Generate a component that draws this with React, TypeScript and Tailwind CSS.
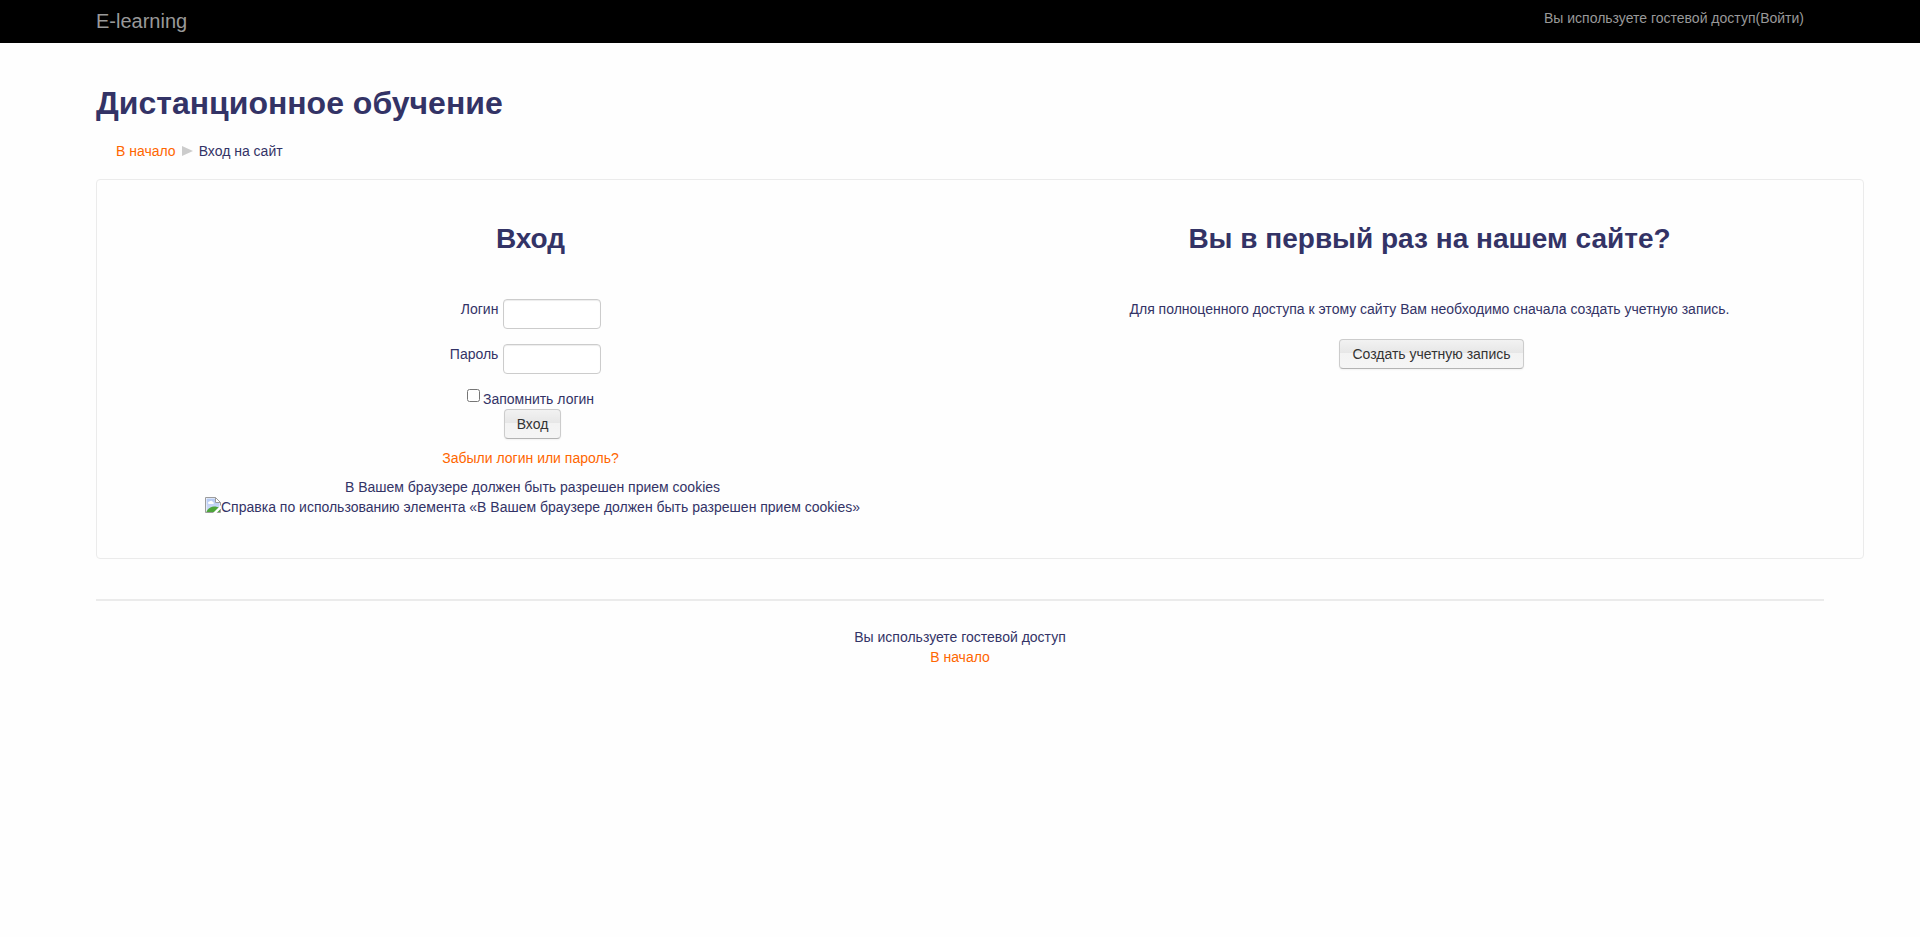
import React from "react";

function BrokenImageIcon() {
  return (
    <svg width="16" height="16" viewBox="0 0 16 16" className="shrink-0" aria-hidden="true">
      <defs>
        <clipPath id="page-body">
          <path d="M1 1H10.5L15 5.5V15H1Z" />
        </clipPath>
        <linearGradient id="sky" x1="0" y1="0" x2="0" y2="1">
          <stop offset="0" stopColor="#b4c9f3" />
          <stop offset="1" stopColor="#d3dff8" />
        </linearGradient>
      </defs>
      <path d="M0.5 0.5H10.5L15.5 5.5V15.5H0.5Z" fill="#fff" stroke="#9c9c9c" />
      <g clipPath="url(#page-body)">
        <rect x="1.5" y="1.5" width="13" height="13" fill="url(#sky)" />
        <path d="M3 6.2a1.4 1.4 0 0 1 1.5-1.6 1.8 1.8 0 0 1 3.3 0.3 1.2 1.2 0 0 1 0.6 2.1H3.8Z" fill="#fff" />
        <path d="M1.5 14.5C3 11.5 6 9.5 9 9.5c2.5 0 4 0.5 6 1.5v4H1.5Z" fill="#4da53a" />
      </g>
      <path d="M16 8L8 16H11.5L16 11.5Z" fill="#fff" />
      <path d="M10.5 0.5V5.5H15.5Z" fill="#fff" stroke="#9c9c9c" />
    </svg>
  );
}

const linkClass = "text-[#ff6600] hover:underline";
const inputClass =
  "h-[30px] w-[98px] rounded border border-[#cccccc] bg-white px-1.5 text-sm text-[#555555] shadow-[inset_0_1px_1px_rgba(0,0,0,0.075)]";
const buttonClass =
  "h-[30px] rounded border border-[#cccccc] border-b-[#b3b3b3] bg-[linear-gradient(to_bottom,#f2f2f2_0%,#e6e6e6_48%,#f3f3f3_48%,#f5f5f5_100%)] px-3 text-sm text-[#333333] shadow-[0_1px_2px_rgba(0,0,0,0.05)]";

function Field({ id, label, type }: { id: string; label: string; type: string }) {
  return (
    <div className="grid grid-cols-[15fr_17fr]">
      <label htmlFor={id} className="pr-[5px] text-right">
        {label}
      </label>
      <input id={id} name={id} type={type} className={inputClass} />
    </div>
  );
}

function LoginPanel() {
  return (
    <section className="text-center">
      <h2 className="text-[28px] leading-10 font-bold">Вход</h2>
      <form className="mt-10" onSubmit={(event) => event.preventDefault()}>
        <div className="flex flex-col gap-[15px]">
          <Field id="username" label="Логин" type="text" />
          <Field id="password" label="Пароль" type="password" />
        </div>
        <div className="mt-[15px] flex justify-center gap-[3px]">
          <input id="remember" type="checkbox" className="size-[13px]" />
          <label htmlFor="remember">Запомнить логин</label>
        </div>
        <div className="pl-1">
          <button type="submit" className={buttonClass}>
            Вход
          </button>
        </div>
      </form>
      <div className="mt-[9px]">
        <a href="#forgot" className={linkClass}>
          Забыли логин или пароль?
        </a>
      </div>
      <div className="mt-[9px] pl-1">
        <p>В Вашем браузере должен быть разрешен прием cookies</p>
        <p className="flex justify-center">
          <BrokenImageIcon />
          <span>Справка по использованию элемента «В Вашем браузере должен быть разрешен прием cookies»</span>
        </p>
      </div>
    </section>
  );
}

function SignupPanel() {
  return (
    <section className="text-center">
      <h2 className="text-[28px] leading-10 font-bold">Вы в первый раз на нашем сайте?</h2>
      <p className="mt-10">
        Для полноценного доступа к этому сайту Вам необходимо сначала создать учетную запись.
      </p>
      <div className="mt-5 pl-1">
        <button type="button" className={buttonClass}>
          Создать учетную запись
        </button>
      </div>
    </section>
  );
}

export default function App() {
  return (
    <div className="min-h-screen bg-[#fefefe] font-['Liberation_Sans',Arial,sans-serif] text-sm leading-5 text-[#333366]">
      <header className="flex h-[43px] items-start justify-between bg-black px-[5%] text-[#999999]">
        <a href="#home" className="pt-[11px] text-xl leading-5">
          E-learning
        </a>
        <p className="pt-2 pr-5">
          Вы используете гостевой доступ(<a href="#login">Войти</a>)
        </p>
      </header>

      <div className="px-[5%]">
        <h1 className="pt-10 text-[32px] leading-10 font-bold">Дистанционное обучение</h1>
        <nav className="mt-[18px] flex items-center px-5" aria-label="Навигация">
          <a href="#home" className={linkClass}>
            В начало
          </a>
          <svg width="11" height="10" viewBox="0 0 11 10" className="mx-1.5" aria-hidden="true">
            <path d="M0 0L11 5L0 10Z" fill="#cccccc" />
          </svg>
          <span>Вход на сайт</span>
        </nav>

        <main className="mt-[18px] -mr-10 grid grid-cols-2 gap-8 rounded border border-[#ebebeb] pt-[39px] pb-[41px]">
          <LoginPanel />
          <SignupPanel />
        </main>

        <footer className="mt-10 border-t-2 border-[#ebebeb] pt-[26px] text-center">
          <p>Вы используете гостевой доступ</p>
          <a href="#home" className={linkClass}>
            В начало
          </a>
        </footer>
      </div>
    </div>
  );
}
